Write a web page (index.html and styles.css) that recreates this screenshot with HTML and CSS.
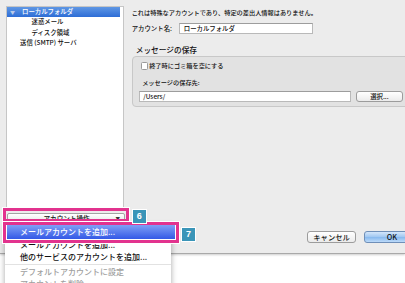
FILE: index.html
```html
<!DOCTYPE html>
<html lang="ja">
<head>
  <meta charset="UTF-8">
  <meta name="viewport" content="width=device-width, initial-scale=1.0">
  <title>アカウント</title>
  <link rel="stylesheet" href="styles.css">
</head>
<body>
  <!-- ダイアログ本体 -->
  <div class="dialog">
    <div class="sidebar">
      <ul class="tree">
        <li class="tree-item selected"><span class="arrow">▼</span>ローカルフォルダ</li>
        <li class="tree-item child">迷惑メール</li>
        <li class="tree-item child">ディスク領域</li>
        <li class="tree-item">送信 (SMTP) サーバ</li>
      </ul>
      <div class="action-btn"><span class="action-label">アカウント操作</span><span class="caret">▼</span></div>
    </div>

    <div class="main">
      <p class="note">これは特殊なアカウントであり、特定の差出人情報はありません。</p>
      <div class="field-row">
        <span class="field-label">アカウント名:</span>
        <div class="text-input name-input">ローカルフォルダ</div>
      </div>
      <h3 class="section-title">メッセージの保存</h3>
      <div class="group">
        <div class="check-row"><span class="checkbox"></span>終了時にゴミ箱を空にする</div>
        <div class="group-label">メッセージの保存先:</div>
        <div class="path-row">
          <div class="text-input path-input">/Users/</div>
          <div class="btn choose-btn">選択...</div>
        </div>
      </div>
      <div class="buttons">
        <div class="btn cancel-btn">キャンセル</div>
        <div class="btn ok-btn">OK</div>
      </div>
    </div>
  </div>

  <!-- ポップアップメニュー -->
  <ul class="menu">
    <li class="menu-item">メールアカウントを追加...</li>
    <li class="menu-item">他のサービスのアカウントを追加...</li>
    <li class="menu-sep"></li>
    <li class="menu-item disabled">デフォルトアカウントに設定</li>
    <li class="menu-item disabled">アカウントを削除...</li>
  </ul>

  <!-- 注釈 -->
  <div class="mark mark-6"></div>
  <div class="mark mark-7"><div class="menu-hilite">メールアカウントを追加...</div></div>
  <div class="badge badge-6">6</div>
  <div class="badge badge-7">7</div>
</body>
</html>
```

FILE: styles.css
```css
/* 全体 */
body {
  margin: 0;
  width: 405px;
  height: 283px;
  overflow: hidden;
  position: relative;
  background: #ffffff;
  font-family: "Noto Sans CJK JP", "Liberation Sans", sans-serif;
  font-weight: 500;
  color: #111111;
}

/* ダイアログ */
.dialog {
  height: 254px;
  box-sizing: border-box;
  padding-top: 6px;
  display: flex;
  background: #ececec;
  border-bottom: 1px solid #a9a9a9;
  box-shadow: 0 1px 2px rgba(0, 0, 0, 0.2);
}

.sidebar {
  width: 118px;
  margin-left: 6px;
  display: flex;
  flex-direction: column;
}

.tree {
  flex: 1;
  margin: 0;
  padding: 0 3px 0 0;
  list-style: none;
  background: #ffffff;
  border: 1px solid #c6c6c6;
}

.tree-item {
  height: 10.4px;
  line-height: 10.4px;
  font-size: 6.4px;
  padding-left: 13px;
  white-space: nowrap;
}

.tree-item.child {
  padding-left: 24.5px;
}

.tree-item.selected {
  padding-left: 3px;
  color: #ffffff;
  background: linear-gradient(#5f97e4, #2d6dd6);
}

.tree-item .arrow {
  display: inline-block;
  width: 12px;
  font-size: 5px;
  color: #b9cbea;
}

.action-btn {
  height: 11.5px;
  margin: 2.5px -1px 29px 0.7px;
  box-sizing: border-box;
  display: flex;
  align-items: center;
  padding: 0 4px;
  font-size: 6.6px;
  background: linear-gradient(#ffffff, #e4e4e4);
  border: 1px solid #a3a3a3;
  border-radius: 2px;
}

.action-label {
  flex: 1;
  text-align: center;
  padding-left: 6px;
}

.caret {
  font-size: 4.5px;
  color: #333333;
}

/* 右側の設定 */
.main {
  flex: 1;
  margin-right: -15px;
  padding-left: 7.7px;
  display: flex;
  flex-direction: column;
}

.note {
  margin: 1.5px 0 0;
  font-size: 6.2px;
  line-height: 10px;
}

.field-row {
  margin-top: 5.8px;
  display: flex;
  align-items: center;
}

.field-label {
  width: 47.6px;
  font-size: 6.4px;
}

.text-input {
  height: 11px;
  box-sizing: border-box;
  background: #ffffff;
  border: 1px solid #b9b9b9;
  border-top-color: #9d9d9d;
  font-size: 6.4px;
  line-height: 9px;
  padding-left: 3.5px;
}

.name-input {
  width: 134px;
}

.section-title {
  margin: 10.7px 0 0 4px;
  font-size: 7.7px;
  font-weight: 500;
  line-height: 10px;
}

.group {
  margin-top: 1px;
  padding: 4.5px 0 4px 6px;
  background: #e2e2e2;
  border: 1px solid #c8c8c8;
  border-radius: 4px;
}

.check-row {
  margin-left: 2px;
  height: 9px;
  display: flex;
  align-items: center;
  font-size: 6.2px;
}

.checkbox {
  width: 5.5px;
  height: 5.5px;
  margin-right: 1px;
  background: #ffffff;
  border: 1px solid #9a9a9a;
  border-radius: 1.5px;
}

.group-label {
  margin: 7.5px 0 0 3.5px;
  font-size: 6.2px;
  line-height: 9px;
}

.path-row {
  margin-top: 4px;
  display: flex;
  gap: 5.5px;
}

.path-input {
  width: 212px;
}

.btn {
  box-sizing: border-box;
  display: flex;
  align-items: center;
  justify-content: center;
  background: linear-gradient(#ffffff, #ebebeb);
  border: 1px solid #9c9c9c;
  border-radius: 3px;
  color: #111111;
}

.choose-btn {
  width: 46.5px;
  height: 11px;
  font-size: 6.4px;
}

.buttons {
  margin: auto 0 10.5px;
  display: flex;
  justify-content: flex-end;
  gap: 8.3px;
}

.cancel-btn {
  width: 48.3px;
  height: 11.5px;
  font-size: 7.3px;
}

.ok-btn {
  width: 56px;
  height: 11.5px;
  font-size: 7.3px;
  border-color: #6f8fb8;
  background: linear-gradient(#d4e6fb, #9fc7f1 50%, #86b8ee 51%, #bcdaf9);
}

/* ポップアップメニュー */
.menu {
  position: absolute;
  left: 5px;
  top: 224px;
  width: 166px;
  height: 70px;
  margin: 0;
  padding: 15px 0 0;
  list-style: none;
  background: #ffffff;
  box-shadow: 0 2px 6px rgba(0, 0, 0, 0.35);
}

.menu-item {
  height: 11.7px;
  line-height: 11.7px;
  padding-left: 15px;
  font-size: 8px;
  color: #111111;
  white-space: nowrap;
}

.menu-item.disabled {
  color: #a0a0a0;
}

.menu-sep {
  height: 1px;
  margin: 1.5px 0;
  background: #e2e2e2;
}

/* 注釈の枠と番号 */
.mark {
  position: absolute;
  box-sizing: border-box;
  border: 3px solid #e2338e;
  box-shadow: 0 0 0 1px #ffffff;
}

.mark-6 {
  left: 3px;
  top: 208px;
  width: 125.5px;
  height: 14px;
}

.mark-7 {
  left: 3px;
  top: 222px;
  width: 175.5px;
  height: 21px;
  padding: 0 0.5px 0.7px 0.7px;
  background: #ffffff;
}

.menu-hilite {
  height: 14.3px;
  line-height: 14.3px;
  padding-left: 13.3px;
  font-size: 8px;
  color: #ffffff;
  background: linear-gradient(#7fa0f6, #3358e6);
  white-space: nowrap;
}

.badge {
  position: absolute;
  width: 15px;
  height: 15px;
  box-sizing: border-box;
  border: 1px solid #ffffff;
  background: #3a95b8;
  color: #ffffff;
  font-family: "Liberation Sans", sans-serif;
  font-weight: bold;
  font-size: 9px;
  line-height: 13px;
  text-align: center;
}

.badge-6 {
  left: 131.7px;
  top: 209px;
}

.badge-7 {
  left: 181px;
  top: 227.3px;
}
```
